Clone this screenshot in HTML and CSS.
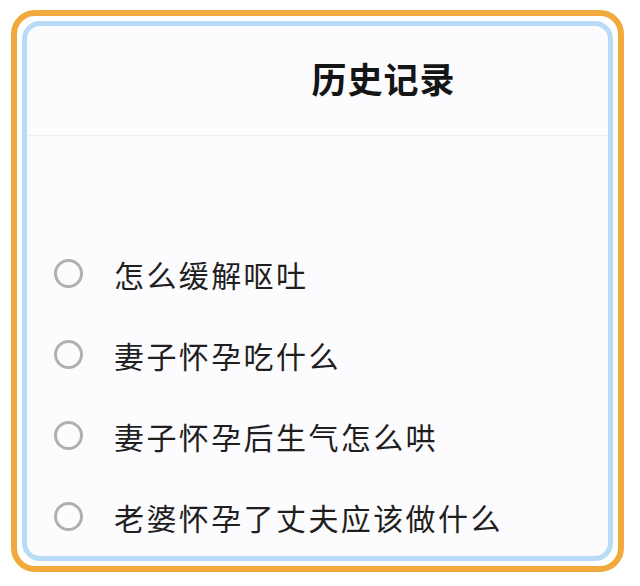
FILE: index.html
```html
<!DOCTYPE html>
<html lang="zh-CN">
<head>
    <meta charset="UTF-8">
    <meta name="viewport" content="width=device-width, initial-scale=1.0">
    <title>历史记录</title>
    <link rel="stylesheet" href="styles.css">
</head>
<body>
    <div class="frame">
        <div class="panel">
            <div class="header">
                <h1 class="title">历史记录</h1>
            </div>

            <ul class="history">
                <li class="item"><span class="radio"></span><span class="label">怎么缓解呕吐</span></li>
                <li class="item"><span class="radio"></span><span class="label">妻子怀孕吃什么</span></li>
                <li class="item"><span class="radio"></span><span class="label">妻子怀孕后生气怎么哄</span></li>
                <li class="item"><span class="radio"></span><span class="label">老婆怀孕了丈夫应该做什么</span></li>
            </ul>
        </div>
    </div>
</body>
</html>
```

FILE: styles.css
```css
body {
    margin: 0;
    background: #ffffff;
    font-family: "Noto Sans CJK SC", "Noto Sans", sans-serif;
}
.frame {
    box-sizing: border-box;
    height: 562px;
    margin: 10px 16px 14px 11px;
    padding: 5px;
    border: 6px solid #f0a93a;
    border-radius: 24px;
    background: #ffffff;
}
.panel {
    box-sizing: border-box;
    height: 100%;
    border: 5px solid #b8dbf8;
    border-radius: 18px;
    background: #fcfbfd;
    overflow: hidden;
}
.header {
    box-sizing: border-box;
    height: 110px;
    padding: 0 0 6px 132px;
    display: flex;
    align-items: center;
    justify-content: center;
    border-bottom: 1px solid #eeedef;
}
.title {
    margin: 0;
    font-size: 35px;
    font-weight: 700;
    color: #151515;
    letter-spacing: 1px;
}
.history {
    list-style: none;
    margin: 0;
    padding: 97px 0 0 27px;
}
.item {
    height: 81px;
    display: flex;
    align-items: center;
    gap: 31px;
}
.radio {
    box-sizing: border-box;
    width: 29px;
    height: 29px;
    border: 3px solid #b0b0b0;
    border-radius: 50%;
    flex: none;
}
.label {
    font-size: 30px;
    letter-spacing: 2.4px;
    color: #1f1f1f;
}
```
